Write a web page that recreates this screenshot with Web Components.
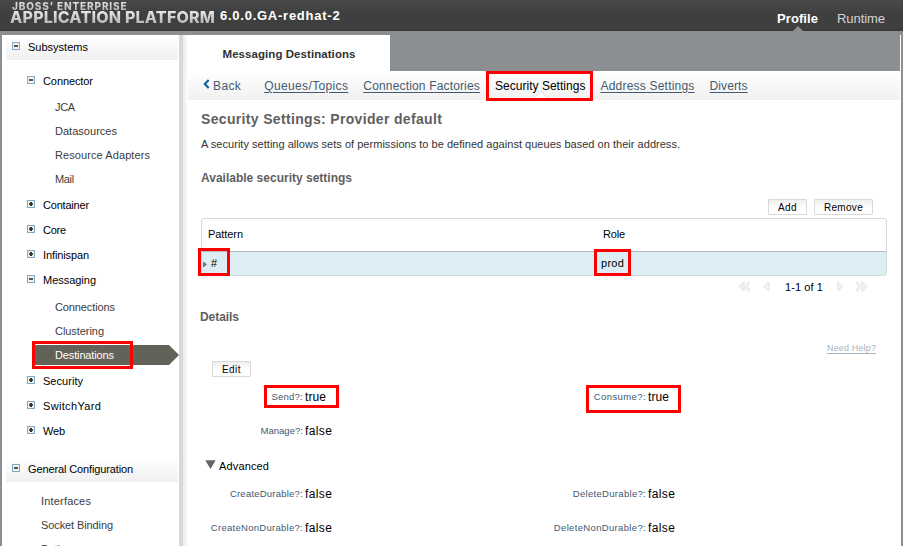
<!DOCTYPE html>
<html lang="en">
<head>
<meta charset="utf-8">
<title>Application Platform - Messaging Destinations</title>
<style>
html, body { margin: 0; height: 100%; overflow: hidden; }
body { font-family: "Liberation Sans", Arial, sans-serif; font-size: 11px; color: #111; background: #8c8f91; }
</style>
</head>
<body>
<console-app></console-app>
<script>
const define = (name, html, setup) => {
  const template = document.createElement('template');
  template.innerHTML = html;
  customElements.define(name, class extends HTMLElement {
    connectedCallback() {
      if (this.shadowRoot) return;
      this.attachShadow({ mode: 'open' }).append(template.content.cloneNode(true));
      if (setup) setup(this, this.shadowRoot);
    }
  });
};

/* One line of text, tracked so that it fills the width given in "w". */
define('ui-text', `<style>
:host { display: inline-block; white-space: pre; line-height: 16px; flex: none; }
</style><slot></slot>`, (host) => {
  const w = Number(host.getAttribute('w'));
  if (!w) return;
  const n = host.textContent.length;
  const natural = host.getBoundingClientRect().width;
  host.style.letterSpacing = ((w - natural) / (n - 0.5)) + 'px';
});

define('ui-mark', `<style>
:host { position: absolute; box-sizing: border-box; border: 3px solid #fe0000; pointer-events: none; z-index: 5; }
</style>`, (host) => {
  const [x, y, w, h] = host.getAttribute('box').split(' ');
  Object.assign(host.style, { left: x + 'px', top: y + 'px', width: w + 'px', height: h + 'px' });
});

define('ui-button', `<style>
:host { display: inline-flex; align-items: center; justify-content: center; box-sizing: border-box; height: 16px;
  border: 1px solid #d9d9d9; border-radius: 1px; background: linear-gradient(#efefef, #fff 60%); font-size: 10px; color: #000; padding-top: 1px; }
</style><slot></slot>`);

define('tree-toggle', `<style>
:host { display: block; width: 8px; height: 8px; flex: none; }
svg { display: block; }
:host([open]) .v { display: none; }
</style><svg width="8" height="8" shape-rendering="crispEdges">
<rect x=".5" y=".5" width="7" height="7" fill="#f3f1e9" stroke="#7fabc6"/>
<rect x="2" y="3" width="4" height="2" fill="#555"/><rect class="v" x="3" y="2" width="2" height="4" fill="#333"/></svg>`);

define('tree-section', `<style>
:host { display: block; }
.head { display: flex; align-items: center; box-sizing: border-box; height: 25px; margin: 0 1px 0 4px; padding: 0 0 1px 6px; background: linear-gradient(#fff, #f0f0f0); color: #000; }
tree-toggle { margin: -2px 8px 0 0; }
</style><div class="head"><tree-toggle open></tree-toggle><slot name="label"></slot></div><slot></slot>`);

define('tree-branch', `<style>
:host { display: block; color: #000; }
.row { display: flex; align-items: center; height: 25px; padding-left: 25px; }
tree-toggle { margin: -2px 8px 0 0; }
.kids { display: none; padding: var(--lead, 2px) 0 1px; }
:host([open]) .kids { display: block; }
</style><div class="row"><tree-toggle></tree-toggle><slot name="label"></slot></div><div class="kids"><slot></slot></div>`,
(host, root) => { if (host.hasAttribute('open')) root.querySelector('tree-toggle').setAttribute('open', ''); });

define('tree-leaf', `<style>
:host { display: flex; align-items: center; height: 24px; padding-left: 53px; color: #3c3c3c; }
:host([top]) { padding-left: 39px; }
:host([selected]) { height: 20px; margin: 2px 0 2px 31px; padding-left: 22px; color: #fff;
  background: #626259; clip-path: polygon(0 0, 136px 0, 146px 50%, 136px 100%, 0 100%); }
</style><slot></slot>`);

define('side-nav', `<style>
:host { display: flex; width: 186px; flex: none; background: #fff; overflow: hidden; }
.tree { width: 177px; flex: none; }
.edge { width: 4px; background: #d8d8d8; }
.fade { width: 5px; background: linear-gradient(90deg, #eaeaea, #fff); }
.first { margin-bottom: 14px; }
.list { padding-top: 8px; }
.list2 { padding-top: 7px; }
.wide { --lead: 3px; }
</style>
<div class="tree">
<tree-section class="first"><ui-text slot="label" w="60">Subsystems</ui-text><div class="list">
<tree-branch open><ui-text slot="label" w="50">Connector</ui-text>
<tree-leaf><ui-text w="20">JCA</ui-text></tree-leaf>
<tree-leaf><ui-text w="62">Datasources</ui-text></tree-leaf>
<tree-leaf><ui-text w="95">Resource Adapters</ui-text></tree-leaf>
<tree-leaf><ui-text w="19">Mail</ui-text></tree-leaf></tree-branch>
<tree-branch><ui-text slot="label" w="46">Container</ui-text></tree-branch>
<tree-branch><ui-text slot="label" w="23">Core</ui-text></tree-branch>
<tree-branch><ui-text slot="label" w="46">Infinispan</ui-text></tree-branch>
<tree-branch open class="wide"><ui-text slot="label" w="53">Messaging</ui-text>
<tree-leaf><ui-text w="60">Connections</ui-text></tree-leaf>
<tree-leaf><ui-text w="49">Clustering</ui-text></tree-leaf>
<tree-leaf selected><ui-text w="59">Destinations</ui-text></tree-leaf></tree-branch>
<tree-branch><ui-text slot="label" w="40">Security</ui-text></tree-branch>
<tree-branch><ui-text slot="label" w="58">SwitchYard</ui-text></tree-branch>
<tree-branch><ui-text slot="label" w="22">Web</ui-text></tree-branch>
</div></tree-section>
<tree-section><ui-text slot="label" w="105">General Configuration</ui-text><div class="list2">
<tree-leaf top><ui-text w="50">Interfaces</ui-text></tree-leaf>
<tree-leaf top><ui-text w="72">Socket Binding</ui-text></tree-leaf>
<tree-leaf top><ui-text w="28">Paths</ui-text></tree-leaf>
</div></tree-section>
</div><div class="edge"></div><div class="fade"></div>`);

define('top-bar', `<style>
:host { display: flex; height: 31px; box-sizing: border-box; padding: 0 18px 0 10px; background: linear-gradient(#494949, #3f3f3f 45%, #3f3f3f 90%, #383838); color: #fff; }
.logo { display: flex; flex-direction: column; width: 210px; font-family: Inter, "Open Sans", sans-serif; font-weight: 800; }
.logo ui-text { color: transparent; background: linear-gradient(#e8e8e8, #b8b8b8); background-clip: text; -webkit-background-clip: text; align-self: flex-start; }
.l1 { font-size: 10px; line-height: 10px; margin: 1px 0 0 2px; }
.l2 { font-size: 16px; line-height: 12px; }
.ver { font-weight: bold; font-size: 13px; margin-top: 8px; }
.tabs { margin-left: auto; display: flex; gap: 19px; font-size: 13px; padding-top: 11px; }
.on { position: relative; font-weight: bold; width: 41px; }
.on::after { content: ""; position: absolute; left: 16px; top: 15px; border: 5px solid transparent; border-top: 0; border-bottom-color: #8c8f91; }
.off { color: #d4d4d4; }
</style>
<div class="logo"><ui-text class="l1" w="115">JBOSS' ENTERPRISE</ui-text><ui-text class="l2" w="205">APPLICATION PLATFORM</ui-text></div>
<ui-text class="ver" w="120">6.0.0.GA-redhat-2</ui-text>
<div class="tabs"><div class="on"><ui-text w="41">Profile</ui-text></div><ui-text class="off" w="48">Runtime</ui-text></div>`);

define('tab-strip', `<style>
:host { display: flex; height: 36px; margin-right: 1px; background: #8c8f91; }
div { display: flex; align-items: center; justify-content: center; width: 202px; padding-top: 2px; box-sizing: border-box; background: #fff; font-weight: bold; font-size: 11.5px; color: #333; }
</style><div><slot></slot></div>`);

define('sub-nav', `<style>
:host { display: flex; align-items: center; height: 29px; margin-right: 1px; padding-left: 15px; background: linear-gradient(#fff, #f1f1f1); font-size: 12px; color: #435b71; }
svg { margin: -3px 3px 0 0; }
.link { text-decoration: underline; text-underline-offset: 2px; margin-right: 15px; }
.back { margin-right: 23px; }
.cur { position: relative; color: #000; margin-right: 15px; }
.cur::after { content: ""; position: absolute; left: 38px; bottom: -6px; border: 8px solid transparent; border-top: 0; border-bottom-color: #fff; filter: drop-shadow(0 -1px 0 #ddd); }
.cur ui-text { position: relative; z-index: 1; }
</style>
<svg width="7" height="10"><path d="M5.7 1L1.8 5l3.9 4" fill="none" stroke="#15649b" stroke-width="2.2"/></svg>
<ui-text class="back" w="28">Back</ui-text>
<ui-text class="link" w="84">Queues/Topics</ui-text>
<ui-text class="link" w="116.500">Connection Factories</ui-text>
<div class="cur"><ui-text w="90.500">Security Settings</ui-text></div>
<ui-text class="link" w="94">Address Settings</ui-text>
<ui-text class="link" w="38">Diverts</ui-text>`);

define('settings-table', `<style>
:host { display: block; box-sizing: border-box; width: 686px; height: 58px; border: 1px solid #d8d8d8; border-radius: 3px; overflow: hidden; color: #000; }
.r { display: flex; align-items: center; }
.c { display: flex; align-items: center; width: 395px; }
.h { height: 33px; box-sizing: border-box; border-bottom: 1px solid #b2bcc0; padding: 0 0 2px 6px; }
.b { height: 23px; box-sizing: border-box; background: #ddedf4; padding: 0 0 1px 1px; }
.b .c { width: 398px; gap: 4px; }
svg { display: block; margin-top: 2px; }
</style>
<div class="r h"><div class="c"><ui-text w="35">Pattern</ui-text></div><ui-text w="22">Role</ui-text></div>
<div class="r b"><div class="c"><svg width="4" height="5"><path d="M0 0h1l3 2.5L1 5H0z" fill="#777"/></svg><ui-text>#</ui-text></div><ui-text w="23">prod</ui-text></div>`);

define('page-control', `<style>
:host { display: flex; align-items: center; height: 22px; width: 130px; margin-left: 537px; color: #000; padding-bottom: 1px; margin-bottom: -1px; box-sizing: border-box; }
svg { display: block; flex: none; fill: #f4f4f4; stroke: #e2e2e2; }
</style>
<svg width="12" height="11"><path d="M6 .5L1 5.5l5 5V7.500L4 5.500 6 3.500zM11 .5l-5 5 5 5V7.500L9 5.500l2-2z"/></svg>
<svg width="7" height="9" style="margin-left:13px"><path d="M6 .8v7.500H4.500L.8 4.500 4.500.8z"/></svg>
<ui-text w="38" style="margin:0 14px 0 15px;padding-top:1px">1-1 of 1</ui-text>
<svg width="7" height="9"><path d="M.8.8v7.500h1L5.500 4.500 1.800.8z"/></svg>
<svg width="12" height="11" style="margin-left:12px"><path d="M1 .5l5 5-5 5V7.500l2-2-2-2zM6 .5l5 5-5 5V7.500l2-2-2-2z"/></svg>`);

define('form-field', `<style>
:host { display: flex; align-items: center; gap: 2px; }
.l { width: 102px; display: flex; justify-content: flex-end; font-size: 9.5px; color: #425873; }
.v { font-size: 12px; color: #000; }
</style><div class="l"></div>`, (host, root) => {
  const make = (text, w) => {
    const node = document.createElement('ui-text');
    node.textContent = text;
    node.setAttribute('w', w);
    return node;
  };
  root.querySelector('.l').append(make(host.getAttribute('label') + ':', host.getAttribute('w')));
  const value = host.getAttribute('value');
  const node = make(value, value === 'true' ? 21 : 27);
  node.className = 'v';
  root.append(node);
});

define('form-row', `<style>
:host { display: grid; grid-template-columns: 343px 1fr; height: 34px; align-items: center; }
</style><slot></slot>`);

define('settings-page', `<style>
:host { display: flex; flex-direction: column; padding-left: 13px; }
:host > * { flex: none; }
.t, .h, .s { display: flex; align-items: center; font-weight: bold; color: #5f5f5f; }
.t { height: 38px; font-size: 14px; }
.d { height: 12px; display: flex; align-items: center; color: #333; }
.h { height: 42px; margin-top: 7px; font-size: 12px; }
.bt { display: flex; gap: 7px; margin-left: 567px; height: 16px; margin-bottom: 3px; }
.s { height: 38px; font-size: 12px; margin: 1px 0 0 -1px; }
.help { height: 24px; margin-left: 626px; display: flex; align-items: center; font-size: 9px; color: #a5b3be; }
.help ui-text { text-decoration: underline; text-underline-offset: 2px; }
.e { margin: 1px 0 3px 11px; width: 39px; }
.adv { display: flex; align-items: center; height: 22px; margin: 7px 0 0 4px; gap: 3px; color: #000; }
.adv svg { margin-top: -3px; }
</style>
<div class="t"><ui-text w="241">Security Settings: Provider default</ui-text></div>
<div class="d"><ui-text w="479">A security setting allows sets of permissions to be defined against queues based on their address.</ui-text></div>
<div class="h"><ui-text w="151">Available security settings</ui-text></div>
<div class="bt"><ui-button style="width:39px"><ui-text w="19">Add</ui-text></ui-button><ui-button style="width:59px"><ui-text w="39">Remove</ui-text></ui-button></div>
<settings-table></settings-table>
<page-control></page-control>
<div class="s"><ui-text w="39">Details</ui-text></div>
<div class="help"><ui-text w="49">Need Help?</ui-text></div>
<ui-button class="e"><ui-text w="19">Edit</ui-text></ui-button>
<form-row><form-field label="Send?" w="31.500" value="true"></form-field><form-field label="Consume?" w="52" value="true"></form-field></form-row>
<form-row><form-field label="Manage?" w="42.500" value="false"></form-field></form-row>
<div class="adv"><svg width="11" height="9"><path d="M.3.3h10.400L5.500 9z" fill="#666"/></svg><ui-text w="50">Advanced</ui-text></div>
<form-row><form-field label="CreateDurable?" w="73" value="false"></form-field><form-field label="DeleteDurable?" w="73" value="false"></form-field></form-row>
<form-row><form-field label="CreateNonDurable?" w="92" value="false"></form-field><form-field label="DeleteNonDurable?" w="92" value="false"></form-field></form-row>`);

define('console-app', `<style>
:host { display: flex; flex-direction: column; position: relative; width: 903px; height: 546px; overflow: hidden; background: #8c8f91; }
top-bar { flex: none; }
.body { display: flex; flex: 1; min-height: 0; margin: 4px 2px 0; background: #fff; overflow: hidden; }
main { width: 713px; flex: none; }
</style>
<top-bar></top-bar>
<div class="body"><side-nav></side-nav><main>
<tab-strip><ui-text w="133">Messaging Destinations</ui-text></tab-strip>
<sub-nav></sub-nav>
<settings-page></settings-page>
</main></div>
<ui-mark box="486 71 107 30"></ui-mark>
<ui-mark box="32 341 101 28"></ui-mark>
<ui-mark box="198 248 32 28"></ui-mark>
<ui-mark box="594 249 37 27"></ui-mark>
<ui-mark box="264 385 75 23"></ui-mark>
<ui-mark box="586 385 95 28"></ui-mark>`);
</script>
</body>
</html>
